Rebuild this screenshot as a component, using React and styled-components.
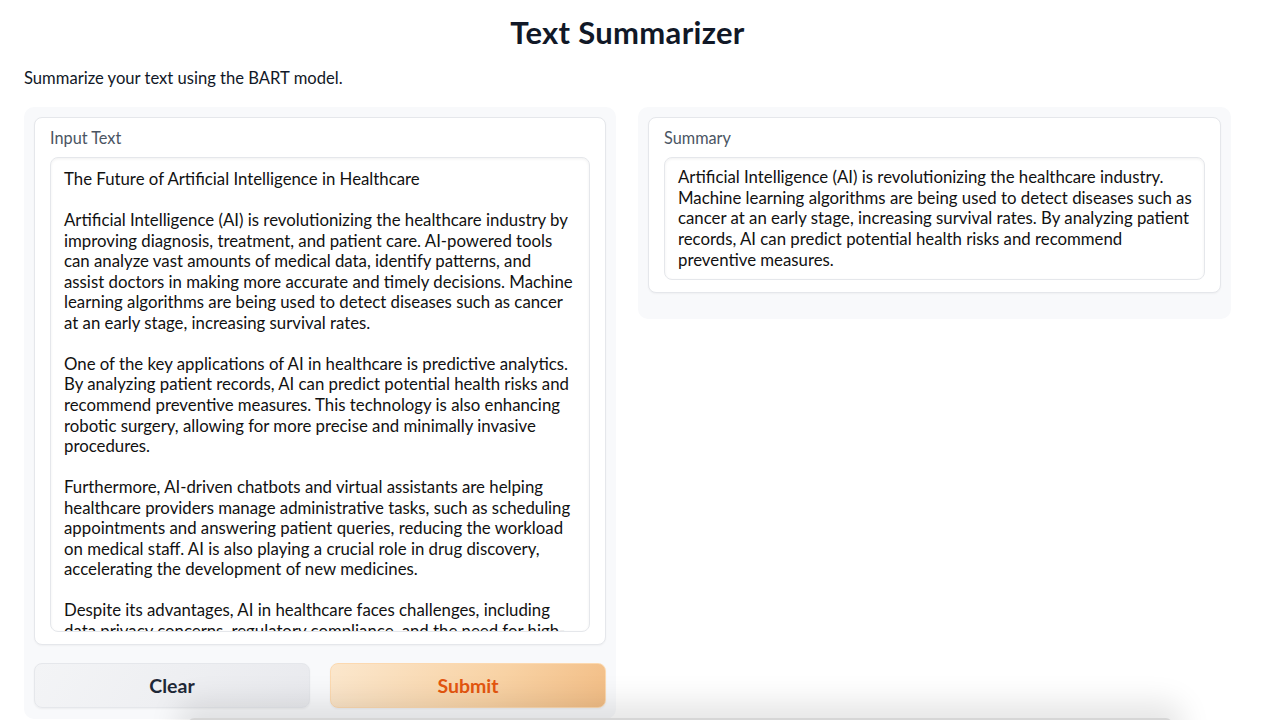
import styled, { createGlobalStyle } from 'styled-components';

const GlobalStyle = createGlobalStyle`
  html, body {
    margin: 0;
    padding: 0;
    background: #ffffff;
    font-family: Lato, "Noto Sans", sans-serif;
    color: #1f2937;
    overflow: hidden;
  }
`;

const Page = styled.div`
  width: 1280px;
  height: 720px;
  box-sizing: border-box;
  padding: 0 49px 0 24px;
  display: flex;
  flex-direction: column;
`;

const Title = styled.h1`
  margin: 0;
  padding-top: 13px;
  height: 38px;
  text-align: center;
  font-size: 31px;
  font-weight: 700;
  color: #111827;
  line-height: 38px;
  letter-spacing: 0.3px;
`;

const Subtitle = styled.p`
  margin: 0;
  padding-top: 17px;
  font-size: 16.6px;
  line-height: 20px;
  color: #111827;
`;

const Columns = styled.div`
  margin-top: 19px;
  display: grid;
  grid-template-columns: 592px 593px;
  gap: 22px;
  align-items: start;
`;

const Panel = styled.div`
  background: #f8f9fb;
  border-radius: 10px;
  padding: 10px;
  display: flex;
  flex-direction: column;
  gap: 18px;
  height: ${p => p.h}px;
  box-sizing: border-box;
`;

const Block = styled.div`
  background: #ffffff;
  border: 1px solid #e5e7eb;
  border-radius: 8px;
  box-shadow: 0 1px 2px rgba(0, 0, 0, 0.04);
  padding: 10px 15px 12px 15px;
  display: flex;
  flex-direction: column;
  gap: 9px;
  height: ${p => p.h}px;
  box-sizing: border-box;
`;

const Label = styled.span`
  font-size: 16.3px;
  line-height: 20px;
  color: #4b5563;
`;

const TextBox = styled.div`
  flex: 1;
  border: 1px solid #e5e7eb;
  border-radius: 8px;
  box-shadow: inset 0 1px 3px rgba(0, 0, 0, 0.06);
  padding: ${p => p.pt}px 13px 0 13px;
  overflow: hidden;
  font-size: 16.8px;
  line-height: ${p => p.lh}px;
  color: #111111;
`;

const Line = styled.div`
  white-space: nowrap;
  min-height: 1lh;
`;

const ButtonRow = styled.div`
  display: grid;
  grid-template-columns: 1fr 1fr;
  gap: 20px;
`;

const Button = styled.button`
  height: 45px;
  border-radius: 8px;
  font-family: Lato, "Noto Sans", sans-serif;
  font-size: 19.5px;
  font-weight: 700;
  cursor: pointer;
  border: 1px solid ${p => (p.primary ? '#fcd9b0' : '#e5e7eb')};
  color: ${p => (p.primary ? '#e4560f' : '#1f2937')};
  background: ${p =>
    p.primary
      ? 'linear-gradient(120deg, #fbe7cd 0%, #f8d2a4 60%, #f2bd85 100%)'
      : 'linear-gradient(120deg, #f3f4f6 0%, #e9eaee 100%)'};
  box-shadow: 0 1px 2px rgba(0, 0, 0, 0.05);
`;

const BottomShade = styled.div`
  position: fixed;
  left: 188px;
  right: 108px;
  bottom: -40px;
  height: 42px;
  border-radius: 6px;
  background: #d6d6d6;
  box-shadow: 0 -6px 30px 10px rgba(0, 0, 0, 0.10);
  pointer-events: none;
`;

const inputLines = [
  'The Future of Artificial Intelligence in Healthcare',
  '',
  'Artificial Intelligence (AI) is revolutionizing the healthcare industry by',
  'improving diagnosis, treatment, and patient care. AI-powered tools',
  'can analyze vast amounts of medical data, identify patterns, and',
  'assist doctors in making more accurate and timely decisions. Machine',
  'learning algorithms are being used to detect diseases such as cancer',
  'at an early stage, increasing survival rates.',
  '',
  'One of the key applications of AI in healthcare is predictive analytics.',
  'By analyzing patient records, AI can predict potential health risks and',
  'recommend preventive measures. This technology is also enhancing',
  'robotic surgery, allowing for more precise and minimally invasive',
  'procedures.',
  '',
  'Furthermore, AI-driven chatbots and virtual assistants are helping',
  'healthcare providers manage administrative tasks, such as scheduling',
  'appointments and answering patient queries, reducing the workload',
  'on medical staff. AI is also playing a crucial role in drug discovery,',
  'accelerating the development of new medicines.',
  '',
  'Despite its advantages, AI in healthcare faces challenges, including',
  'data privacy concerns, regulatory compliance, and the need for high-',
  'quality data. Addressing these issues will be key to unlocking its full',
];

const summaryLines = [
  'Artificial Intelligence (AI) is revolutionizing the healthcare industry.',
  'Machine learning algorithms are being used to detect diseases such as',
  'cancer at an early stage, increasing survival rates. By analyzing patient',
  'records, AI can predict potential health risks and recommend',
  'preventive measures.',
];

export default function App() {
  return (
    <>
      <GlobalStyle />
      <Page>
        <Title>Text Summarizer</Title>
        <Subtitle>Summarize your text using the BART model.</Subtitle>
        <Columns>
          <Panel h={612}>
            <Block h={528}>
              <Label>Input Text</Label>
              <TextBox pt={11} lh={20.55}>
                {inputLines.map((l, i) => (
                  <Line key={i}>{l}</Line>
                ))}
              </TextBox>
            </Block>
            <ButtonRow>
              <Button>Clear</Button>
              <Button primary>Submit</Button>
            </ButtonRow>
          </Panel>
          <Panel h={212}>
            <Block h={176}>
              <Label>Summary</Label>
              <TextBox pt={9} lh={20.7}>
                {summaryLines.map((l, i) => (
                  <Line key={i}>{l}</Line>
                ))}
              </TextBox>
            </Block>
          </Panel>
        </Columns>
      </Page>
      <BottomShade />
    </>
  );
}
